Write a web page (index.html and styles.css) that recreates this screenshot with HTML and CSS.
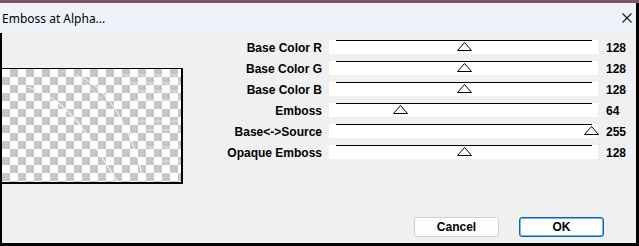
FILE: index.html
```html
<!DOCTYPE html>
<html>
<head>
<meta charset="utf-8">
<link rel="stylesheet" href="styles.css">
</head>
<body>
<div class="window">
  <div class="topstrip"></div>
  <div class="titlebar">
    <span class="title">Emboss at Alpha...</span>
    <svg class="close" width="10" height="10" viewBox="0 0 10 10"><path d="M0.5 0.5 L9.5 9.5 M9.5 0.5 L0.5 9.5" stroke="#1a1a1a" stroke-width="1.1" fill="none"/></svg>
  </div>
  <div class="content">
    <div class="main">
      <div class="preview">
        <svg class="fx" width="181" height="116" viewBox="0 0 181 116">
          <path d="M26 18 C 50 26, 68 40, 88 70 S 112 108, 118 116" stroke="#fff" stroke-width="1.2" fill="none" opacity="0.75"/>
          <path d="M74 6 C 96 14, 112 34, 124 60 S 138 96, 142 116" stroke="#fff" stroke-width="1.2" fill="none" opacity="0.7"/>
          <path d="M60 2 C 80 8, 96 22, 108 44" stroke="#fff" stroke-width="1" fill="none" opacity="0.4"/>
          <g stroke="#fff" stroke-width="1" opacity="0.55">
            <line x1="118" y1="6" x2="181" y2="6"/>
            <line x1="122" y1="14" x2="181" y2="14"/>
            <line x1="128" y1="22" x2="181" y2="22"/>
            <line x1="132" y1="31" x2="181" y2="31"/>
            <line x1="136" y1="52" x2="181" y2="52"/>
            <line x1="140" y1="61" x2="181" y2="61"/>
            <line x1="144" y1="78" x2="181" y2="78"/>
            <line x1="150" y1="92" x2="181" y2="92"/>
            <line x1="152" y1="104" x2="181" y2="104"/>
          </g>
        </svg>
      </div>
      <div class="controls">
        <div class="row"><span class="label">Base Color R</span><div class="track"><div class="line"></div><svg class="thumb" style="left:128px" width="15" height="9" viewBox="0 0 15 9"><polygon points="7.5,0.5 14.5,8.5 0.5,8.5" fill="#fff" stroke="#000" stroke-width="1"/></svg></div><span class="value">128</span></div>
        <div class="row"><span class="label">Base Color G</span><div class="track"><div class="line"></div><svg class="thumb" style="left:128px" width="15" height="9" viewBox="0 0 15 9"><polygon points="7.5,0.5 14.5,8.5 0.5,8.5" fill="#fff" stroke="#000" stroke-width="1"/></svg></div><span class="value">128</span></div>
        <div class="row"><span class="label">Base Color B</span><div class="track"><div class="line"></div><svg class="thumb" style="left:128px" width="15" height="9" viewBox="0 0 15 9"><polygon points="7.5,0.5 14.5,8.5 0.5,8.5" fill="#fff" stroke="#000" stroke-width="1"/></svg></div><span class="value">128</span></div>
        <div class="row"><span class="label">Emboss</span><div class="track"><div class="line"></div><svg class="thumb" style="left:64px" width="15" height="9" viewBox="0 0 15 9"><polygon points="7.5,0.5 14.5,8.5 0.5,8.5" fill="#fff" stroke="#000" stroke-width="1"/></svg></div><span class="value">64</span></div>
        <div class="row"><span class="label">Base&lt;-&gt;Source</span><div class="track"><div class="line"></div><svg class="thumb" style="left:255px" width="15" height="9" viewBox="0 0 15 9"><polygon points="7.5,0.5 14.5,8.5 0.5,8.5" fill="#fff" stroke="#000" stroke-width="1"/></svg></div><span class="value">255</span></div>
        <div class="row"><span class="label">Opaque Emboss</span><div class="track"><div class="line"></div><svg class="thumb" style="left:128px" width="15" height="9" viewBox="0 0 15 9"><polygon points="7.5,0.5 14.5,8.5 0.5,8.5" fill="#fff" stroke="#000" stroke-width="1"/></svg></div><span class="value">128</span></div>
      </div>
    </div>
    <div class="footer">
      <button class="btn">Cancel</button>
      <button class="btn btn-default">OK</button>
    </div>
  </div>
</div>
</body>
</html>
```
FILE: styles.css
```css
* { box-sizing: border-box; }
html, body { margin: 0; padding: 0; }
body {
  width: 639px;
  height: 246px;
  overflow: hidden;
  background: #000;
}
.window {
  width: 639px;
  height: 246px;
  display: flex;
  flex-direction: column;
}
.topstrip {
  height: 3px;
  background: #7e5566;
  flex: none;
}
.titlebar {
  height: 30px;
  flex: none;
  background: #eef3f9;
  border-right: 3px solid #000;
  display: flex;
  align-items: center;
  justify-content: space-between;
  padding-left: 2px;
  padding-right: 4px;
}
.title {
  font-family: "Noto Sans", "Open Sans", sans-serif;
  font-size: 12px;
  color: #000;
  position: relative;
  top: 0px;
}
.close { display: block; }
.content {
  flex: 1;
  background: #f0f0f0;
  border-left: 2px solid #000;
  border-right: 3px solid #000;
  border-bottom: 3px solid #000;
  display: flex;
  flex-direction: column;
  font-family: "Liberation Sans", Arial, sans-serif;
  font-weight: bold;
  font-size: 12px;
  color: #000;
}
.main {
  display: flex;
  align-items: flex-start;
}
.preview {
  width: 181px;
  height: 116px;
  margin-top: 35px;
  border-top: 1px solid #000;
  border-right: 2px solid #000;
  border-bottom: 2px solid #000;
  background: repeating-conic-gradient(#c6c6c6 0 25%, #ffffff 0 50%) 0 0 / 16px 16px;
  position: relative;
  overflow: hidden;
}
.fx {
  position: absolute;
  left: 0;
  top: 0;
}
.controls {
  margin-left: 17px;
  padding-top: 3px;
  display: flex;
  flex-direction: column;
}
.row {
  height: 21px;
  display: flex;
  align-items: center;
}
.label {
  width: 122px;
  text-align: right;
  white-space: nowrap;
  position: relative;
  top: 1px;
}
.track {
  width: 269px;
  height: 14px;
  margin-left: 7px;
  background: #fff;
  position: relative;
}
.line {
  margin: 0 6px 0 7px;
  height: 1px;
  background: #000;
}
.thumb {
  position: absolute;
  top: 2px;
  margin-left: -0.5px;
  display: block;
}
.value {
  margin-left: 8px;
  position: relative;
  top: 1px;
}
.footer {
  display: flex;
  justify-content: flex-end;
  gap: 20px;
  padding-right: 32px;
  margin-top: 33px;
}
.btn {
  width: 85px;
  height: 20px;
  padding: 0;
  background: #fdfdfd;
  border: 1px solid #d0d0d0;
  border-radius: 3px;
  font-family: "Liberation Sans", Arial, sans-serif;
  font-weight: bold;
  font-size: 12px;
  color: #000;
}
.btn-default {
  border: 1px solid #0067c0;
  box-shadow: inset 0 0 0 0.5px #0067c0;
}
```
